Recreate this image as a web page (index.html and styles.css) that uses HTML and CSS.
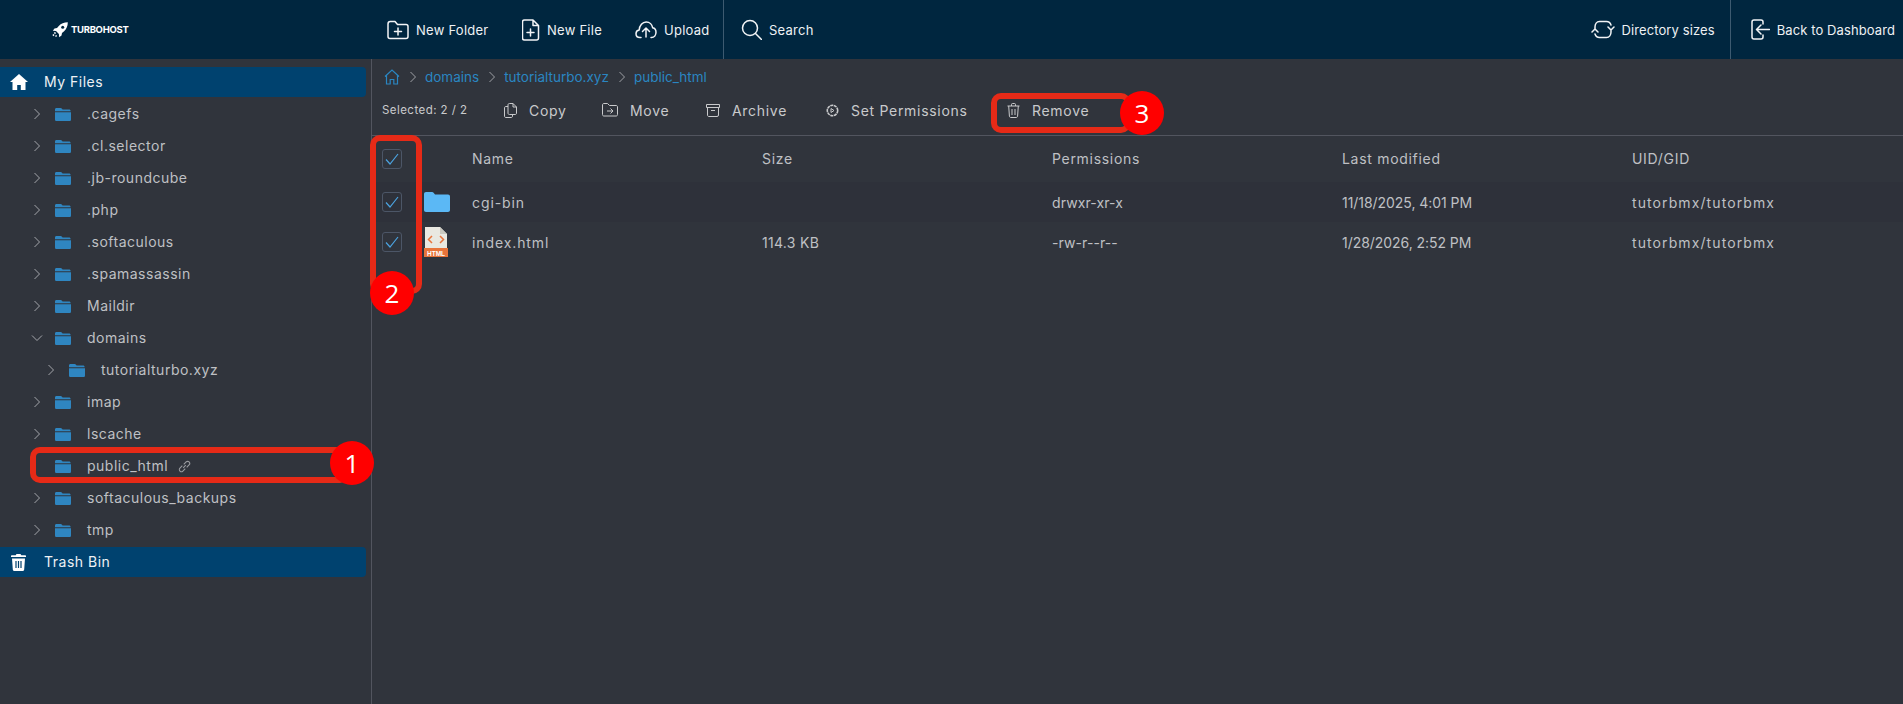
FILE: index.html
```html
<!DOCTYPE html>
<html lang="en">
<head>
<meta charset="utf-8">
<title>File Manager</title>
<link rel="stylesheet" href="styles.css">
</head>
<body>
<svg class="defs" width="0" height="0" aria-hidden="true">
  <symbol id="folder" viewBox="0 0 16 13"><path d="M0 1.500C0 .7.600 0 1.400 0h4.200c.5 0 .9.200 1.200.6l.8 1H14c1 0 1.600.6 1.700 1.600H0z"/><path d="M0 4.200h16v7.200c0 .9-.7 1.600-1.600 1.600H1.600C.7 13 0 12.300 0 11.400z"/></symbol>
  <symbol id="chev" viewBox="0 0 8 12"><path d="M1.500 1 6.500 6l-5 5" fill="none" stroke="currentColor" stroke-width="1"/></symbol>
</svg>
<header class="topbar">
  <div class="brand">
    <svg class="rocket" width="16" height="16" viewBox="0 0 16 16"><path fill="#fff" d="M15.800.2c-3.800 0-6.800 1.300-9 3.700L5 6 2.500 6.500.8 8.800l3.200.3 2.900 2.900.3 3.200 2.300-1.700.5-2.500 2.100-1.800c2.400-2.200 3.700-5.200 3.700-9z"/><circle cx="10.700" cy="5.300" r="1.500" fill="#00263f"/><path fill="#fff" d="M1.800 10.800 3 10l1 1-1 1.200zM.3 13l1.300-.9.9.9-.9 1.300zM3 14l1.200-1 .9.900-1.100 1.100z"/></svg>
    <span class="brand-name">TURBOHOST</span>
  </div>
  <nav class="top-actions">
    <a class="top-item tight-folder"><svg width="22" height="20" viewBox="0 0 22 20" class="ti"><path d="M1 4c0-1.500 1-2.500 2.300-2.500H8l2.500 3H19c1.200 0 2 .8 2 2v10c0 1.200-.8 2-2 2H3c-1.200 0-2-.8-2-2zM11 8v7M7.500 11.500h7"/></svg>New Folder</a>
    <a class="top-item tight-file"><svg width="18" height="22" viewBox="0 0 18 22" class="ti"><path d="M2.500 1H11l5.500 5.500V19c0 1.200-.8 2-2 2h-12c-1.200 0-2-.8-2-2V3C.5 1.800 1.300 1 2.500 1zM11 1v5.500h5.500M8.500 10v7M5 13.500h7"/></svg>New File</a>
    <a class="top-item"><svg width="22" height="18" viewBox="0 0 22 18" class="ti"><path d="M6 16.500H5c-2.500 0-4-1.700-4-3.800 0-2 1.400-3.500 3.200-3.700C4.500 4.500 7.500 1 11.200 1c3.500 0 6 2.600 6.500 5.800 2 .4 3.300 2.200 3.300 4.500 0 2.800-1.800 5.200-4.500 5.200H16M11 16V7M7.500 10.500 11 7l3.500 3.500"/></svg>Upload</a>
  </nav>
  <a class="top-item search"><svg width="21" height="21" viewBox="0 0 21 21" class="ti"><circle cx="9" cy="9" r="7.500"/><path d="m14.500 14.500 6 6"/></svg>Search</a>
  <div class="top-right">
    <a class="top-item"><svg width="24" height="19" viewBox="0 0 24 19" class="ti"><path d="M4 9V7c0-3 1.700-5.500 4.500-5.500h7c2.200 0 3.800 1.200 4.500 3.500M20 10v2c0 3-1.700 5.500-4.500 5.500h-7c-2.200 0-3.800-1.200-4.500-3.500M1 12l3-3 3 3M17 7l3 3 3-3"/></svg>Directory sizes</a>
    <a class="top-item back"><svg width="19" height="21" viewBox="0 0 19 21" class="ti"><path d="M12 5V3c0-1.200-.8-2-2-2H3c-1.200 0-2 .8-2 2v15c0 1.200.8 2 2 2h7c1.200 0 2-.8 2-2v-2M18.500 10.500H6M10 6l-4.500 4.500L10 15"/></svg>Back to Dashboard</a>
  </div>
</header>
<div class="main">
  <aside class="sidebar">
    <div class="root-item">
      <svg width="18" height="16" viewBox="0 0 18 16"><path fill="#fff" d="M9 0 0 8h2.500v8h4.700v-5h3.600v5h4.700V8H18z"/></svg>
      <span>My Files</span>
    </div>
    <ul class="tree">
      <li class="node"><svg class="chev"><use href="#chev"/></svg><svg class="fold"><use href="#folder"/></svg><span>.cagefs</span></li>
      <li class="node"><svg class="chev"><use href="#chev"/></svg><svg class="fold"><use href="#folder"/></svg><span>.cl.selector</span></li>
      <li class="node"><svg class="chev"><use href="#chev"/></svg><svg class="fold"><use href="#folder"/></svg><span>.jb-roundcube</span></li>
      <li class="node"><svg class="chev"><use href="#chev"/></svg><svg class="fold"><use href="#folder"/></svg><span>.php</span></li>
      <li class="node"><svg class="chev"><use href="#chev"/></svg><svg class="fold"><use href="#folder"/></svg><span>.softaculous</span></li>
      <li class="node"><svg class="chev"><use href="#chev"/></svg><svg class="fold"><use href="#folder"/></svg><span>.spamassassin</span></li>
      <li class="node"><svg class="chev"><use href="#chev"/></svg><svg class="fold"><use href="#folder"/></svg><span>Maildir</span></li>
      <li class="node"><svg class="chev open"><use href="#chev"/></svg><svg class="fold"><use href="#folder"/></svg><span>domains</span></li>
      <li class="node child"><svg class="chev"><use href="#chev"/></svg><svg class="fold"><use href="#folder"/></svg><span>tutorialturbo.xyz</span></li>
      <li class="node"><svg class="chev"><use href="#chev"/></svg><svg class="fold"><use href="#folder"/></svg><span>imap</span></li>
      <li class="node"><svg class="chev"><use href="#chev"/></svg><svg class="fold"><use href="#folder"/></svg><span>lscache</span></li>
      <li class="node"><svg class="chev none"></svg><svg class="fold"><use href="#folder"/></svg><span>public_html</span><svg class="link" width="13" height="13" viewBox="0 0 12 12"><path d="M4.800 7.200 7.200 4.800M4 5.300 1.800 7.500a1.900 1.900 0 0 0 2.700 2.700l2.200-2.200M5.300 4l2.200-2.200a1.900 1.900 0 0 1 2.700 2.700L8 6.700"/></svg></li>
      <li class="node"><svg class="chev"><use href="#chev"/></svg><svg class="fold"><use href="#folder"/></svg><span>softaculous_backups</span></li>
      <li class="node"><svg class="chev"><use href="#chev"/></svg><svg class="fold"><use href="#folder"/></svg><span>tmp</span></li>
    </ul>
    <div class="root-item">
      <svg class="trash-root" width="15" height="17" viewBox="0 0 15 17"><path fill="#fff" d="M5.500 0h4l.8 1.300H14c.6 0 1 .4 1 1v.7H0v-.7c0-.6.400-1 1-1h3.700zM1 4.500h13l-.8 11c-.1.900-.7 1.500-1.500 1.500H3.300c-.8 0-1.400-.6-1.500-1.500z"/><path stroke="#00426f" stroke-width="1.200" d="M5 7v7M7.500 7v7M10 7v7"/></svg>
      <span>Trash Bin</span>
    </div>
  </aside>
  <section class="content">
    <div class="crumbs">
      <svg class="crumb-home" width="16" height="16" viewBox="0 0 16 16"><path d="M1 7.500 8 1l7 6.500M2.500 6.500V15h3.700v-4.500h3.600V15h3.700V6.500"/></svg>
      <svg class="crumb-chev"><use href="#chev"/></svg><a>domains</a>
      <svg class="crumb-chev"><use href="#chev"/></svg><a>tutorialturbo.xyz</a>
      <svg class="crumb-chev"><use href="#chev"/></svg><a>public_html</a>
    </div>
    <div class="actions">
      <span class="selected">Selected: 2 / 2</span>
      <a class="act copy"><svg width="13" height="15" viewBox="0 0 13 15" class="ai"><path d="M4 3.500H2C1 3.500.5 4 .5 5v8c0 1 .5 1.500 1.500 1.500h5c1 0 1.500-.5 1.500-1.500v-1.500M4 2c0-1 .5-1.500 1.500-1.500H9l3.500 3.500v6c0 1-.5 1.500-1.500 1.500H5.500C4.500 11.500 4 11 4 10zM9 .5V4h3.500"/></svg>Copy</a>
      <a class="act move"><svg width="16" height="14" viewBox="0 0 16 14" class="ai"><path d="M.5 2c0-1 .5-1.500 1.500-1.500h3.500l2 2H14c1 0 1.500.5 1.500 1.500v7.500c0 1-.5 1.500-1.500 1.500H2c-1 0-1.500-.5-1.500-1.500zM5 8h6M8.500 5.500 11 8l-2.500 2.500"/></svg>Move</a>
      <a class="act archive"><svg width="14" height="13" viewBox="0 0 14 13" class="ai"><path d="M.5.500h13v3H.5zM1.500 3.500V11c0 1 .5 1.500 1.500 1.500h8c1 0 1.500-.5 1.500-1.500V3.500M5 6.500h4"/></svg>Archive</a>
      <a class="act perms"><svg width="13" height="13" viewBox="0 0 13 13" class="ai"><circle cx="6.500" cy="6.500" r="5.200" stroke-width="1.600" stroke-dasharray="3 .6"/><path d="M5 4.500 8 6.500 5 8.500z"/></svg>Set Permissions</a>
      <a class="act remove"><svg width="13" height="15" viewBox="0 0 13 15" class="ai"><path d="M.5 3h12M4.500 3V1.500c0-.6.400-1 1-1h2c.6 0 1 .4 1 1V3M1.700 3l.7 10c.1 1 .6 1.500 1.500 1.500h5.200c.9 0 1.400-.5 1.500-1.500l.7-10M5 6v6M8 6v6"/></svg>Remove</a>
    </div>
    <div class="table">
      <div class="row head">
        <span class="cell-check"><span class="check"><svg width="14" height="12" viewBox="0 0 14 12"><path d="M1 6.500 5 11 13 1"/></svg></span></span>
        <span class="cell-icon"></span>
        <span class="col">Name</span><span class="col">Size</span><span class="col">Permissions</span><span class="col">Last modified</span><span class="col">UID/GID</span>
      </div>
      <div class="row odd">
        <span class="cell-check"><span class="check"><svg width="14" height="12" viewBox="0 0 14 12"><path d="M1 6.500 5 11 13 1"/></svg></span></span>
        <span class="cell-icon"><svg width="26" height="20" viewBox="0 0 26 20"><path fill="#5bb8f5" d="M0 2C0 .8.800 0 2 0h6c.8 0 1.300.3 1.800.9L11 2.500h13c1.200 0 2 .8 2 2V18c0 1.200-.8 2-2 2H2c-1.200 0-2-.8-2-2z"/></svg></span>
        <span class="col name">cgi-bin</span><span class="col size"></span><span class="col perm">drwxr-xr-x</span><span class="col date">11/18/2025, 4:01 PM</span><span class="col uid">tutorbmx/tutorbmx</span>
      </div>
      <div class="row">
        <span class="cell-check"><span class="check"><svg width="14" height="12" viewBox="0 0 14 12"><path d="M1 6.500 5 11 13 1"/></svg></span></span>
        <span class="cell-icon"><svg width="24" height="30" viewBox="0 0 24 30"><path fill="#e9e8e1" d="M1 0h15l7 7v16H1z"/><path fill="#c9c8bf" d="M16 0v7h7z"/><path fill="#e8743b" d="M0 21h24v9H0z"/><path fill="none" stroke="#e8743b" stroke-width="1.500" d="M8 9l-3.500 3.500L8 16M16 9l3.500 3.500L16 16"/><text class="html-tag" x="12" y="28.500" text-anchor="middle">HTML</text></svg></span>
        <span class="col name">index.html</span><span class="col size">114.3 KB</span><span class="col perm">-rw-r--r--</span><span class="col date">1/28/2026, 2:52 PM</span><span class="col uid">tutorbmx/tutorbmx</span>
      </div>
    </div>
  </section>
</div>
<div class="mark mark-1"></div><div class="badge badge-1">1</div>
<div class="mark mark-2"></div><div class="badge badge-2">2</div>
<div class="mark mark-3"></div><div class="badge badge-3">3</div>
</body>
</html>
```
FILE: styles.css
```css
* { box-sizing: border-box; }
html, body { margin: 0; height: 100%; overflow: hidden; }
body { background: #30343c; font-family: Inter, "Open Sans", sans-serif; font-size: 14px; color: #c4c5c8; position: relative; }
.defs { position: absolute; }
a { color: inherit; }
.topbar { height: 59px; background: #00263f; display: flex; align-items: center; color: #eef1f4; font-size: 13px; letter-spacing: .25px; }
.brand { width: 387px; padding-left: 52px; display: flex; align-items: center; gap: 3px; flex: none; }
.brand-name { font-size: 9.500px; font-weight: 700; color: #fff; letter-spacing: -.3px; }
.top-actions { display: flex; align-items: center; width: 337px; height: 100%; border-right: 1px solid #3d5a70; flex: none; gap: 0; }
.top-item { display: flex; align-items: center; gap: 7px; white-space: nowrap; }
.tight-folder { width: 135px; }
.tight-file { width: 113px; }
.ti { fill: none; stroke: #f2f4f6; stroke-width: 1.500; stroke-linecap: round; stroke-linejoin: round; flex: none; }
.search { margin-left: 17px; }
.top-right { margin-left: auto; display: flex; align-items: center; height: 100%; padding-right: 8px; letter-spacing: .1px; }
.back { height: 100%; margin-left: 15px; padding-left: 20px; border-left: 1px solid #3d5a70; }
.main { display: flex; height: 645px; }
.sidebar { width: 372px; flex: none; border-right: 1px solid #52555f; padding: 8px 0 0; letter-spacing: .5px; }
.root-item { height: 30px; width: 366px; background: #00426f; border-radius: 0 4px 4px 0; display: flex; align-items: center; color: #eef1f4; font-size: 14px; }
.root-item svg { margin-left: 10px; width: 18px; flex: none; }
.root-item span, .node span { padding-bottom: 2px; }
.root-item span { margin-left: 16px; }
.root-item .trash-root { width: 15px; margin-left: 11px; margin-right: 2px; }
.tree { list-style: none; margin: 1px 0 1px; padding: 0; }
.node { height: 32px; display: flex; align-items: center; padding-left: 33px; color: #bfc0c4; }
.node.child { padding-left: 47px; }
.chev { width: 8px; height: 12px; color: #a4a6ab; flex: none; }
.chev.open { transform: rotate(90deg); }
.fold { width: 16px; height: 13px; margin-left: 14px; margin-right: 16px; fill: #2f86c1; flex: none; }
.link { margin-left: 10px; fill: none; stroke: #9a9ca1; stroke-width: 1; flex: none; }
.content { flex: 1; min-width: 0; }
.crumbs { height: 36px; display: flex; align-items: center; padding-left: 12px; color: #2a86c2; font-size: 13.500px; }
.crumb-home { fill: none; stroke: #2a86c2; stroke-width: 1.200; flex: none; }
.crumb-chev { width: 8px; height: 12px; color: #9fa1a6; margin: 0 8px 0 9px; flex: none; }
.actions { height: 41px; display: flex; align-items: center; padding-left: 10px; border-bottom: 1px solid #52555f; padding-bottom: 10px; color: #c9cacc; font-size: 14px; letter-spacing: .7px; }
.selected { font-size: 11.500px; width: 122px; flex: none; letter-spacing: .45px; }
.act { display: flex; align-items: center; gap: 12px; white-space: nowrap; flex: none; }
.ai { fill: none; stroke: #c9cacc; stroke-width: 1; flex: none; }
.copy { width: 98px; }
.move { width: 104px; }
.archive { width: 120px; }
.perms { width: 181px; }
.table { padding-top: 2px; }
.row { display: flex; align-items: center; height: 40px; }
.row.head { height: 44px; padding-bottom: 3px; }
.row.odd { background: #2e313a; }
.cell-check { width: 52px; padding-left: 10px; flex: none; display: flex; }
.check { width: 20px; height: 20px; border: 1px solid #4c5667; border-radius: 3px; display: flex; align-items: center; justify-content: center; }
.check svg { fill: none; stroke: #4ba3e0; stroke-width: 1.200; }
.cell-icon { width: 48px; flex: none; display: flex; align-items: center; }
.html-tag { font: 700 6.500px "Liberation Sans", sans-serif; fill: #fff; }
.col { width: 290px; flex: none; color: #bfc0c4; font-size: 14px; white-space: nowrap; }
.row.head .col { letter-spacing: .7px; }
.name { letter-spacing: .9px; }
.size { letter-spacing: .3px; }
.perm { letter-spacing: .1px; }
.date { letter-spacing: -.05px; }
.uid { letter-spacing: 1.100px; }
.mark { position: absolute; border: 6px solid #e62a17; border-radius: 10px; }
.mark-1 { left: 30px; top: 447px; width: 320px; height: 36px; }
.mark-2 { left: 370px; top: 135px; width: 52px; height: 159px; }
.mark-3 { left: 991px; top: 93px; width: 140px; height: 40px; }
.badge { position: absolute; width: 44px; height: 44px; border-radius: 50%; background: #ff0000; color: #fff; font-size: 26px; display: flex; align-items: center; justify-content: center; font-family: "Open Sans", sans-serif; }
.badge-1 { left: 330px; top: 441px; }
.badge-2 { left: 370px; top: 271px; }
.badge-3 { left: 1120px; top: 91px; }
```
